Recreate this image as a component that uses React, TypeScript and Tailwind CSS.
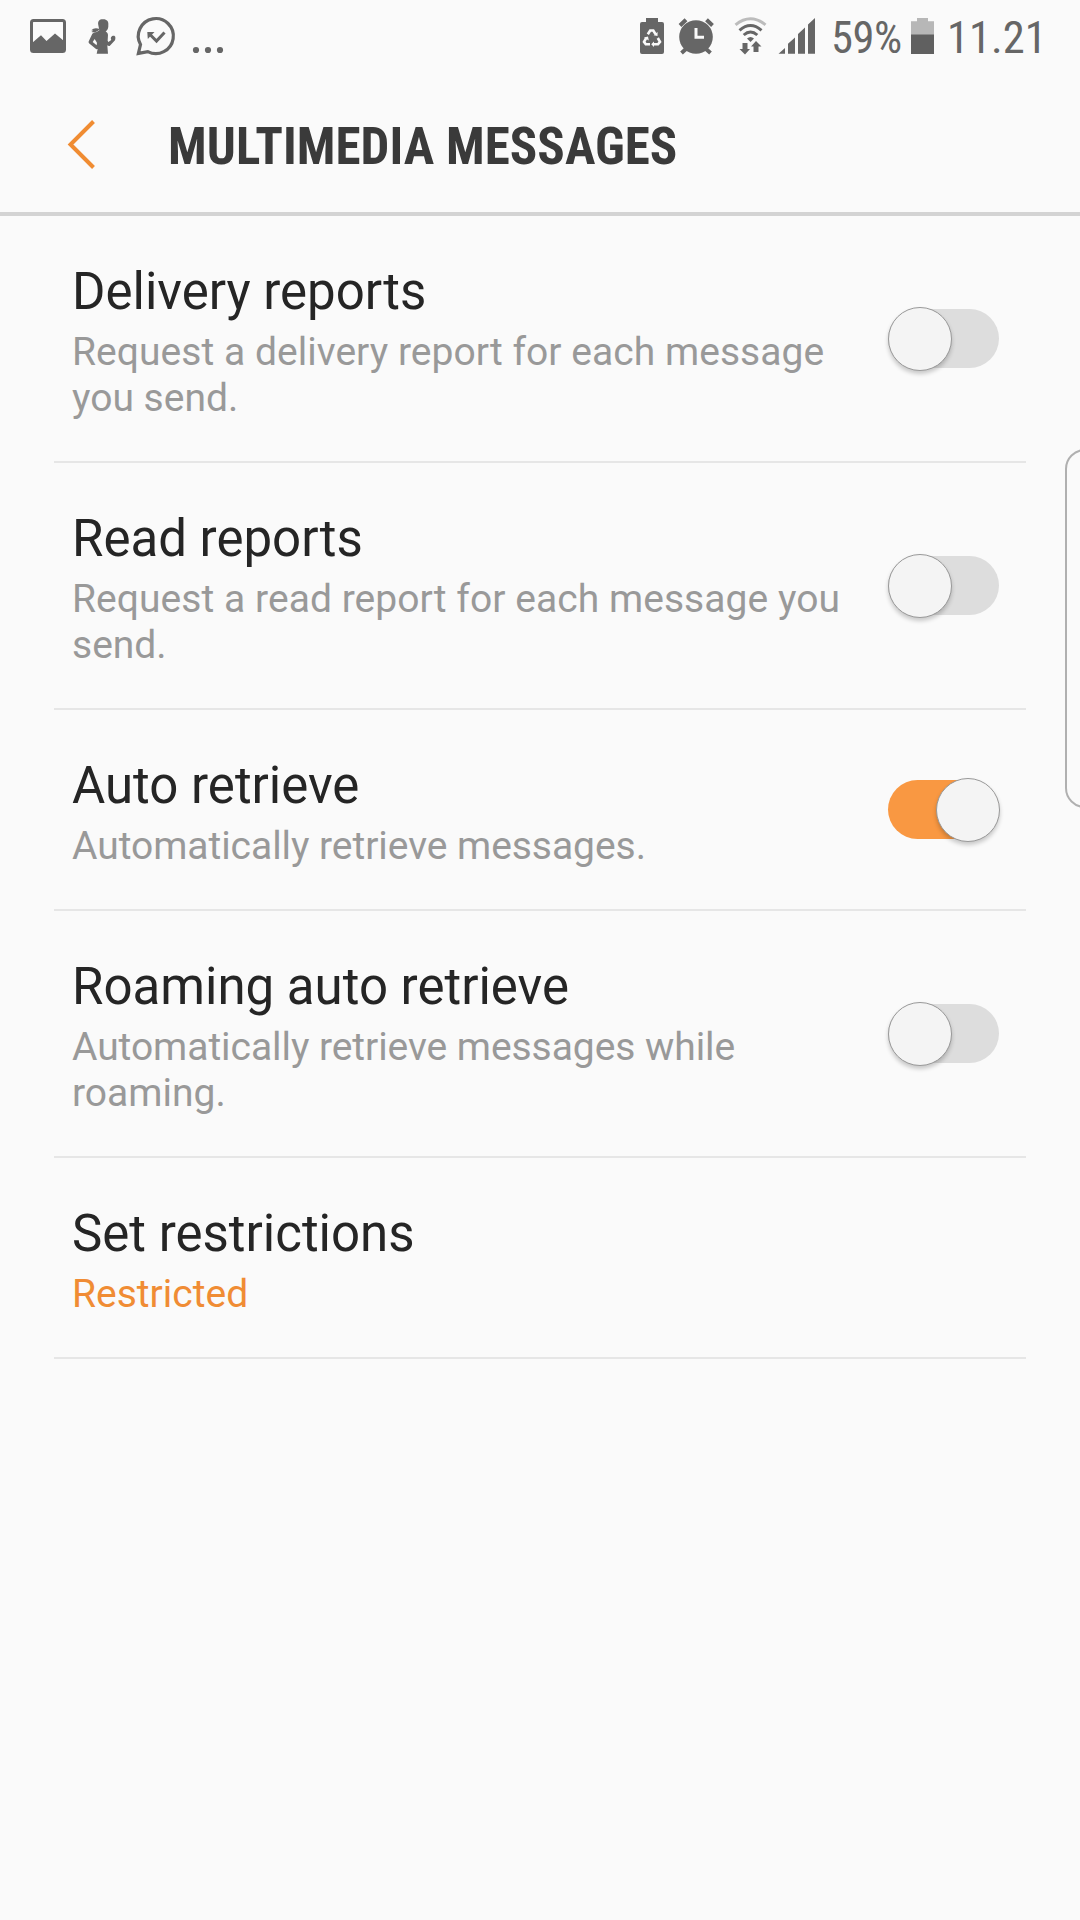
import type { ReactNode } from 'react';

function StatusBar() {
  return (
    <header className="flex h-[72px] shrink-0 justify-between text-[#666666]">
      <svg width="240" height="72" viewBox="0 0 240 72" fill="none" aria-label="Notifications">
        <rect x="31.5" y="20.5" width="33" height="31" rx="2" stroke="currentColor" strokeWidth="3" />
        <path d="M32 43 L41 35.3 L46.5 41 L55 33.5 L64 41 V51 H32 Z" fill="currentColor" />
        <g fill="currentColor" transform="translate(20 0) scale(0.3333)">
          <path d="M235 76 C232 62 240 57 250 58 C261 58 266 65 265 74 C266 84 262 92 257 94 C260 97 264 99 264 105 L263 122 L265 126 L274 120 C270 112 275 107 281 107 C287 107 287 114 285 121 L269 138 Q265 139 262 136 L264 161 H230 L233 147 L229 148 L207 130 Q204 126 207 122 L217 101 Q221 96 230 96 L238 91 Z" />
          <path d="M214 96 L220 92 L214 91 C220 84 229 83 239 87 C235 94 226 99 214 96 Z" />
          <path d="M224 117 L218 126 L230 136 L231 128 Z" fill="#fafafa" />
        </g>
        <path d="M138.4 53.4 L140.5 44.5 A17.5 17.5 0 1 1 147.8 51.6 Z" stroke="currentColor" strokeWidth="3.2" />
        <path d="M149.5 34 L156.5 41 L164.5 32.5" stroke="currentColor" strokeWidth="3" />
        <path d="M147.3 32 H154.5 L147.8 39 Z" fill="currentColor" />
        <g fill="currentColor">
          <circle cx="196" cy="50" r="3.1" />
          <circle cx="208" cy="50" r="3.1" />
          <circle cx="220" cy="50" r="3.1" />
        </g>
      </svg>
      <div className="flex font-['Roboto_Condensed','Roboto'] text-[44.5px] leading-[76px] [font-stretch:75%]">
        <svg width="211" height="72" viewBox="620 0 211 72" fill="currentColor" aria-label="Device status">
          <path d="M646 18 H658 V22 H662 Q664 22 664 24 V52 Q664 54 662 54 H642 Q640 54 640 52 V24 Q640 22 642 22 H646 Z" />
          <g fill="none" stroke="#fafafa" strokeWidth="2.6">
            <path d="M647.8 34.3 L650.2 30.5 H653.3 L655.5 34.2" />
            <path d="M657.8 38 L660 41.8 L658 44.3 H653" />
            <path d="M650 44.3 H645.8 L644 41.8 L646.2 38" />
          </g>
          <path d="M653.6 35.2 L657.5 36 L657.6 32 Z M654 41.6 V47 L651.2 44.3 Z M644 37.6 L648 36.4 L648.8 40.4 Z" fill="#fafafa" />
          <circle cx="696" cy="37" r="16.8" />
          <path d="M680 25.5 L686 19.8 M706.5 19.8 L712.5 25.5 M686 49 L681.5 53 M706 49 L710.5 53" stroke="currentColor" strokeWidth="4" />
          <path d="M696 28 V37.3 H704" fill="none" stroke="#fafafa" strokeWidth="3" />
          <g fill="none" strokeWidth="3">
            <path d="M735.5 24.8 Q750.5 12.8 765.5 24.8" stroke="#bcbcbc" />
            <path d="M739.5 30.3 Q750.5 20.8 761.5 30.3" stroke="currentColor" />
            <path d="M743.7 35 Q750.5 29 757.3 35" stroke="currentColor" />
          </g>
          <path d="M747 38.5 Q750.5 35.5 754 38.5 L750.5 42 Z" />
          <path d="M742.5 43 H747.5 V49 H750 L745 54.5 L739.5 49 H742.5 Z M753.5 52 H758.5 V46.5 H761.5 L756 41 L751 46.5 H753.5 Z" />
          <path d="M778.5 53.8 L785 48 V53.8 Z M788 53.8 V43.8 L795 37.5 V53.8 Z M798 53.8 V34 L805 27.5 V53.8 Z M808 53.8 V24.5 L815 18 V53.8 Z" />
        </svg>
        <span className="w-[80px] tracking-[-0.5px]">59%</span>
        <svg width="36" height="72" viewBox="911 0 36 72" aria-label="Battery">
          <path d="M917 18 H928 V21.3 H934 V35 H911 V21.3 H917 Z" fill="#b7b7b7" />
          <path d="M911 34.5 H934 V54 H911 Z" fill="#606060" />
        </svg>
        <span className="w-[133px]">11.21</span>
      </div>
    </header>
  );
}

function Toggle({ on = false }: { on?: boolean }) {
  return (
    <div
      role="switch"
      aria-checked={on}
      className={`flex h-[59px] w-[111px] shrink-0 items-center rounded-full ${
        on ? 'justify-end bg-[#f99842]' : 'justify-start bg-[#dddddd]'
      }`}
    >
      <div className="-mr-px size-[64px] shrink-0 rounded-full border border-[#999999] bg-[#f4f4f4] shadow-[0_3px_4px_rgba(0,0,0,0.2)]" />
    </div>
  );
}

function Row({ title, children, accent = false, control }: { title: string; children: ReactNode; accent?: boolean; control?: ReactNode }) {
  return (
    <section className="flex items-center justify-between border-b-2 border-[#e6e6e6] pr-[27px] pl-[18px]">
      <div className="pt-[46px] pb-[40px]">
        <h2 className="text-[51px] leading-[60px] text-[#252525]">{title}</h2>
        <p className={`mt-[7px] text-[39px] leading-[46px] ${accent ? 'text-[#f08c34]' : 'text-[#999999]'}`}>{children}</p>
      </div>
      {control}
    </section>
  );
}

export default function App() {
  return (
    <div className="relative flex h-[1920px] w-[1080px] flex-col overflow-hidden bg-[#fafafa] font-['Roboto',sans-serif]">
      <StatusBar />
      <div className="flex h-[144px] shrink-0 items-center border-b-4 border-[#d3d3d3] pl-[66px]">
        <svg width="32" height="52" viewBox="0 0 32 52" fill="none" className="mt-[3px]" aria-label="Back">
          <path d="M27.5 3.5 L4.5 26.5 L27.5 49.5" stroke="#f08c32" strokeWidth="4" />
        </svg>
        <h1 className="ml-[70px] pt-[9px] font-['Roboto_Condensed','Roboto'] text-[51px] leading-[60px] font-bold tracking-[0.05px] whitespace-nowrap text-[#3a3a3a] [font-stretch:75%]">
          MULTIMEDIA MESSAGES
        </h1>
      </div>
      <main className="mx-[54px] flex flex-col">
        <Row title="Delivery reports" control={<Toggle />}>
          <span className="tracking-[0.04px]">Request a delivery report for each message</span>
          <br />
          you send.
        </Row>
        <Row title="Read reports" control={<Toggle />}>
          <span className="tracking-[0.05px]">Request a read report for each message you</span>
          <br />
          send.
        </Row>
        <Row title="Auto retrieve" control={<Toggle on />}>
          <span className="tracking-[-0.05px]">Automatically retrieve messages.</span>
        </Row>
        <Row title="Roaming auto retrieve" control={<Toggle />}>
          <span className="tracking-[-0.06px]">Automatically retrieve messages while</span>
          <br />
          roaming.
        </Row>
        <Row title="Set restrictions" accent>Restricted</Row>
      </main>
      <div className="absolute top-[449px] left-[1065px] h-[359px] w-[40px] rounded-[20px] border-2 border-[#b0b0b0]" />
    </div>
  );
}
